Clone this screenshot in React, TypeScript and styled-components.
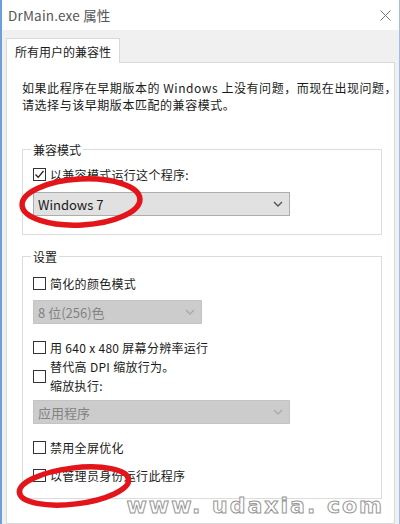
import React from 'react';
import styled, { createGlobalStyle } from 'styled-components';

const GlobalStyle = createGlobalStyle`
  html, body {
    margin: 0;
    padding: 0;
    background: #ffffff;
  }
  body {
    font-family: 'Noto Sans CJK SC', 'Noto Sans', sans-serif;
    font-size: 12px;
    color: #1a1a1a;
  }
`;

const Window = styled.div`
  position: relative;
  width: 400px;
  height: 524px;
  box-sizing: border-box;
  border-left: 2px solid #6f9fd6;
  border-right: 1px solid #9cc0e4;
  display: flex;
  flex-direction: column;
  overflow: hidden;
  background: #f0f0f0;
`;

const TitleBar = styled.div`
  height: 30px;
  flex: none;
  background: #ffffff;
  display: flex;
  align-items: center;
  justify-content: space-between;
  padding: 0 8px 0 6px;
`;

const Title = styled.span`
  font-size: 13.5px;
  color: #555;
  letter-spacing: 0.2px;
`;

const Body = styled.div`
  flex: 1;
  display: flex;
  flex-direction: column;
  padding: 8px 4px 0 4px;
`;

const TabStrip = styled.div`
  display: flex;
  height: 24px;
  flex: none;
`;

const Tab = styled.div`
  background: #ffffff;
  border: 1px solid #d9d9d9;
  border-bottom: none;
  padding: 0 8px;
  display: flex;
  align-items: center;
  margin-bottom: -1px;
  position: relative;
  z-index: 1;
`;

const Panel = styled.div`
  flex: 1;
  background: #ffffff;
  border: 1px solid #d9d9d9;
  padding: 16px 12px 0 15px;
  display: flex;
  flex-direction: column;
`;

const Intro = styled.p`
  margin: 0;
  line-height: 17px;
  letter-spacing: 0.55px;
  white-space: nowrap;
`;

const Group = styled.fieldset<{ $top: number; $bottom: number }>`
  margin: ${p => p.$top}px 0 0 0;
  padding: 0 10px ${p => p.$bottom}px 10px;
  border: 1px solid #dcdcdc;
  min-width: 0;
  display: flex;
  flex-direction: column;
  align-items: flex-start;
`;

const Legend = styled.legend`
  padding: 0 2px;
  margin-left: -2px;
  line-height: 17px;
`;

const Row = styled.div<{ $top: number }>`
  display: flex;
  align-items: center;
  gap: 4px;
  margin-top: ${p => p.$top}px;
  line-height: 17px;
  letter-spacing: 0.3px;
`;

const TwoLine = styled.div`
  line-height: 19px;
`;

const Box = styled.span`
  width: 11px;
  height: 11px;
  border: 1px solid #333;
  background: #fff;
  flex: none;
  display: flex;
  align-items: center;
  justify-content: center;
`;

const Select = styled.div<{ $width: number; $top: number; $disabled?: boolean }>`
  width: ${p => p.$width}px;
  height: 24px;
  box-sizing: border-box;
  margin-top: ${p => p.$top}px;
  border: 1px solid ${p => (p.$disabled ? '#c4c4c4' : '#adadad')};
  background: ${p => (p.$disabled ? '#cccccc' : '#e1e1e1')};
  color: ${p => (p.$disabled ? '#838383' : '#1a1a1a')};
  font-size: 13px;
  display: flex;
  align-items: center;
  justify-content: space-between;
  padding: 0 6px 0 4px;
`;

const Overlay = styled.svg`
  position: absolute;
  left: 0;
  top: 0;
  pointer-events: none;
`;

const Watermark = styled.div`
  position: absolute;
  right: 15px;
  bottom: 6px;
  font-family: 'DejaVu Sans', sans-serif;
  font-size: 22px;
  font-weight: bold;
  letter-spacing: 2px;
  color: #ffffff;
  -webkit-text-stroke: 1px #969696;
`;

const Check = ({ checked }: { checked?: boolean }) => (
  <Box>
    {checked && (
      <svg width="11" height="11" viewBox="0 0 11 11">
        <path d="M1.5 5.5 L4.2 8.3 L9.5 2" fill="none" stroke="#222" strokeWidth="1.3" />
      </svg>
    )}
  </Box>
);

const Chevron = ({ color }: { color: string }) => (
  <svg width="10" height="6" viewBox="0 0 10 6">
    <path d="M1 1 L5 5 L9 1" fill="none" stroke={color} strokeWidth="1.4" />
  </svg>
);

export default function App() {
  return (
    <>
      <GlobalStyle />
      <Window>
        <TitleBar>
          <Title>DrMain.exe 属性</Title>
          <svg width="11" height="11" viewBox="0 0 11 11">
            <path d="M0.5 0.5 L10.5 10.5 M10.5 0.5 L0.5 10.5" stroke="#777" strokeWidth="1" />
          </svg>
        </TitleBar>
        <Body>
          <TabStrip>
            <Tab>所有用户的兼容性</Tab>
          </TabStrip>
          <Panel>
            <Intro>
              如果此程序在早期版本的 Windows 上没有问题，而现在出现问题，
              <br />
              请选择与该早期版本匹配的兼容模式。
            </Intro>
            <Group $top={28} $bottom={18}>
              <Legend>兼容模式</Legend>
              <Row $top={8}>
                <Check checked />
                以兼容模式运行这个程序:
              </Row>
              <Select $width={257} $top={9}>
                Windows 7
                <Chevron color="#555" />
              </Select>
            </Group>
            <Group $top={13} $bottom={14}>
              <Legend>设置</Legend>
              <Row $top={10}>
                <Check />
                简化的颜色模式
              </Row>
              <Select $width={169} $top={8} $disabled>
                8 位(256)色
                <Chevron color="#aaa" />
              </Select>
              <Row $top={15}>
                <Check />
                用 640 x 480 屏幕分辨率运行
              </Row>
              <Row $top={1}>
                <Check />
                <TwoLine>
                  替代高 DPI 缩放行为。
                  <br />
                  缩放执行:
                </TwoLine>
              </Row>
              <Select $width={257} $top={5} $disabled>
                应用程序
                <Chevron color="#aaa" />
              </Select>
              <Row $top={15}>
                <Check />
                禁用全屏优化
              </Row>
              <Row $top={11}>
                <Check checked />
                以管理员身份运行此程序
              </Row>
            </Group>
          </Panel>
        </Body>
        <Overlay width="400" height="524" viewBox="0 0 400 524">
          <ellipse cx="79" cy="202" rx="59" ry="23" fill="none" stroke="#e3141a" strokeWidth="5.5" transform="rotate(-3 79 202)" />
          <ellipse cx="72" cy="486" rx="55" ry="18" fill="none" stroke="#e3141a" strokeWidth="5.5" transform="rotate(-7 72 486)" />
        </Overlay>
        <Watermark>www. udaxia. com</Watermark>
      </Window>
    </>
  );
}
